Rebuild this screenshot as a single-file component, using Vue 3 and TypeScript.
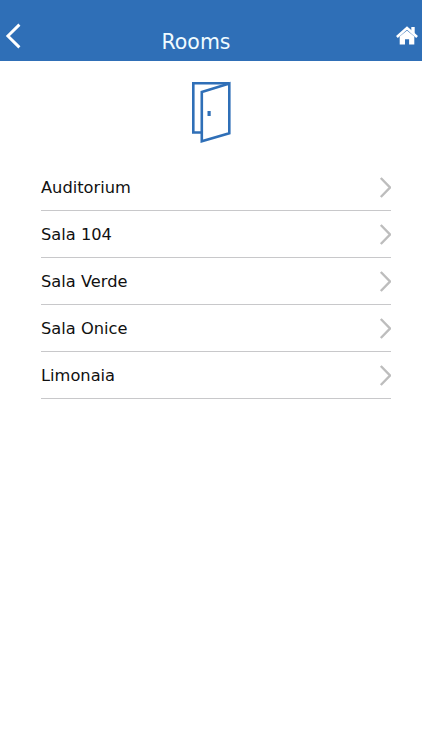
<script setup lang="ts">
interface Room {
  id: number
  name: string
}

const rooms: Room[] = [
  { id: 1, name: 'Auditorium' },
  { id: 2, name: 'Sala 104' },
  { id: 3, name: 'Sala Verde' },
  { id: 4, name: 'Sala Onice' },
  { id: 5, name: 'Limonaia' },
]
</script>

<template>
  <div class="screen">
    <header class="bar">
      <button class="nav back" aria-label="Back">
        <svg width="16" height="26" viewBox="0 0 16 26">
          <path d="M14.400 1.600 2.900 13 14.400 24.400" fill="none" stroke="#fff" stroke-width="2.900" />
        </svg>
      </button>
      <h1 class="title">Rooms</h1>
      <button class="nav home" aria-label="Home">
        <svg width="22" height="20" viewBox="0 0 22 20">
          <path d="M15.300 1h3.400v7l-3.400-3z" fill="#fff" />
          <path d="M.9 10.900 11 2l10.100 8.900" fill="none" stroke="#fff" stroke-width="2.600" />
          <path d="M3.700 10.600 11 4.400l7.300 6.200V18.600h-5.200v-5.300H9v5.300H3.700z" fill="#fff" />
        </svg>
      </button>
    </header>
    <main class="content">
      <svg class="door" width="40" height="62" viewBox="0 0 40 62">
        <g fill="none" stroke="#2f6fb7" stroke-width="2.600">
          <path d="M10.500 51.500H2.300V2.300H38.300" />
          <path d="M10.800 11 38.300 2.500V52.300L10.800 60.200z" />
        </g>
        <path d="M16.500 30h3.200v5h-3.200z" fill="#2f6fb7" />
      </svg>
      <ul class="rooms">
        <li v-for="room in rooms" :key="room.id" class="room">
          <span class="name">{{ room.name }}</span>
          <svg class="chevron" width="12" height="21" viewBox="0 0 12 21">
            <path d="M1.800 1 11 10.500 1.800 20" fill="none" stroke="#bdbdbd" stroke-width="2.400" />
          </svg>
        </li>
      </ul>
    </main>
  </div>
</template>

<style>
body {
  margin: 0;
  background: #fff;
}
</style>

<style scoped>
.screen {
  height: 750px;
  background: #fff;
  font-family: Verdana, "DejaVu Sans", sans-serif;
}
.bar {
  box-sizing: border-box;
  height: 61px;
  padding: 22px 4px 0 5px;
  display: grid;
  grid-template-columns: 26px 1fr 26px;
  align-items: start;
  background: #2f6fb7;
}
.nav {
  padding: 0;
  border: 0;
  background: none;
  display: flex;
}
.back {
  padding-top: 1px;
}
.home {
  justify-content: flex-end;
  padding-top: 4px;
}
.title {
  margin: 6px 0 0 -31px;
  text-align: center;
  color: #f0fbff;
  font-size: 20.500px;
  line-height: 28px;
  font-weight: 400;
}
.content {
  display: flex;
  flex-direction: column;
  align-items: center;
  padding: 20px 31px 0 41px;
}
.door {
  display: block;
  margin-right: 10px;
}
.rooms {
  align-self: stretch;
  list-style: none;
  margin: 21px 0 0;
  padding: 0;
}
.room {
  box-sizing: border-box;
  height: 46.920px;
  padding-top: 2px;
  border-bottom: 1px solid #c8c8ca;
  display: flex;
  align-items: center;
  justify-content: space-between;
  color: #111;
  font-size: 16.250px;
}
.name {
  padding-top: 1px;
  line-height: 20px;
}
.chevron {
  flex: none;
}
</style>
